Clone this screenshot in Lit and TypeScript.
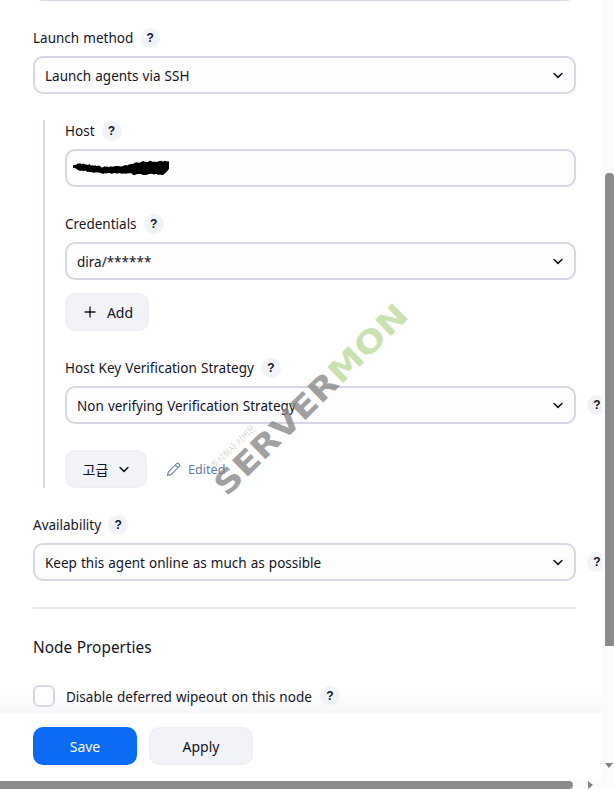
import { LitElement, html, css, svg } from "lit";
import { customElement } from "lit/decorators.js";

const chevron = html`<svg class="chev" viewBox="0 0 12 8" width="10" height="7" aria-hidden="true"><path d="M1.3 1.6 6 6.3l4.7-4.7" fill="none" stroke="#14141f" stroke-width="1.9" stroke-linecap="round" stroke-linejoin="round"/></svg>`;
const help = html`<span class="help">?</span>`;

function select(text: string) {
  return html`<div class="control select"><span class="value">${text}</span>${chevron}</div>`;
}

/* Jagged redaction scribble, computed from a small deterministic noise source. */
function scribblePath(): string {
  const W = 96;
  let seed = 7;
  const noise = () => {
    seed = (seed * 16807) % 2147483647;
    return seed / 2147483647;
  };
  const topAt = (x: number) =>
    x < 6 ? 3 + (6 - x) * 0.5 : x < 28 ? 3 + (x - 6) * 0.15 : x < 48 ? 7 - (x - 28) * 0.05 : x < 68 ? 6 - (x - 48) * 0.2 : 1.5;
  const botAt = (x: number) =>
    x < 6 ? 10 - (6 - x) * 0.4 : x < 30 ? 10.5 + (x - 6) * 0.12 : x < 60 ? 13.5 : x < 90 ? 14.5 : 14.5 - (x - 90) * 0.9;
  const top: string[] = [];
  const bot: string[] = [];
  for (let x = 0; x <= W; x += 1.5) {
    top.push(`${x} ${(topAt(x) + noise() * 1.4 - 0.7).toFixed(1)}`);
    bot.push(`${x} ${(botAt(x) + noise() * 1.4 - 0.7).toFixed(1)}`);
  }
  return `M${top.join("L")}L${bot.reverse().join("L")}Z`;
}
const scribbleD = scribblePath();

@customElement("app-root")
export class AppRoot extends LitElement {
  static styles = css`
    :host {
      display: block;
      position: relative;
      width: 614px;
      height: 789px;
      overflow: hidden;
      background: #fff;
      color: #14141f;
      font-family: "Noto Sans", "Noto Sans CJK KR", sans-serif;
      font-size: 13.5px;
      word-spacing: 0.6px;
    }
    .content {
      position: relative;
      display: flex;
      flex-direction: column;
      padding-left: 33px;
      width: 543px;
      margin-top: -37px;
    }
    .label {
      display: flex;
      align-items: center;
      gap: 7px;
      height: 20px;
      line-height: 20px;
      margin-bottom: 8px;
      white-space: nowrap;
    }
    .help {
      flex: none;
      width: 20px;
      height: 20px;
      border-radius: 50%;
      background: #f1f3f7;
      display: inline-flex;
      align-items: center;
      justify-content: center;
      font-size: 12px;
      font-weight: 700;
      line-height: 1;
      font-family: "Liberation Sans", sans-serif;
    }
    .control {
      box-sizing: border-box;
      height: 38px;
      width: 100%;
      flex: none;
      border: 2px solid #d5d8e4;
      border-radius: 10px;
      background: #fdfdfe;
      display: flex;
      align-items: center;
      padding: 0 11px 0 10px;
      white-space: nowrap;
    }
    .select { justify-content: space-between; }
    .value { padding-top: 2px; }
    .top { margin-bottom: 27px; }
    .with-help {
      display: flex;
      align-items: center;
      gap: 11px;
    }
    .nested {
      display: flex;
      flex-direction: column;
      margin: 26px 0 27px 10px;
      padding: 1px 0 0 20px;
      border-left: 2px solid #d5d8e0;
    }
    .field { margin-bottom: 27px; }
    .field.cred { margin-bottom: 13px; }
    .field.strategy { margin-bottom: 26px; }
    .btn {
      box-sizing: border-box;
      height: 38px;
      border: 2px solid #eef0f5;
      border-radius: 10px;
      background: #f1f3f7;
      display: inline-flex;
      align-items: center;
      justify-content: center;
      font-size: 14px;
    }
    .btn.addbtn { width: 84px; gap: 11px; padding-left: 3px; }
    .btn.adv { width: 82px; gap: 11px; }
    .btnrow { display: flex; align-items: center; gap: 19px; }
    .edited {
      display: inline-flex;
      align-items: center;
      gap: 7px;
      color: #5f7a9f;
      font-size: 12.6px;
    }
    hr {
      border: 0;
      height: 2px;
      width: 100%;
      margin: 26px 0 0;
      background: #e6e7ee;
    }
    h2 {
      font-weight: 400;
      font-size: 15.4px;
      line-height: 22px;
      margin: 28px 0 26px;
    }
    .check {
      display: flex;
      align-items: center;
      gap: 11px;
      height: 22px;
      white-space: nowrap;
    }
    .check-text { padding-top: 2px; }
    .box {
      box-sizing: border-box;
      width: 22px;
      height: 22px;
      border: 2px solid #d5d8e4;
      border-radius: 6px;
      background: #fff;
    }
    .check .help { margin-left: -3px; }
    .bar {
      position: absolute;
      left: 0;
      right: 0;
      top: 713px;
      height: 76px;
      background: #fff;
      box-sizing: border-box;
      padding: 14px 0 0 33px;
      display: flex;
      align-items: flex-start;
      gap: 12px;
    }
    .fade {
      position: absolute;
      left: 0;
      right: 0;
      top: 691px;
      height: 22px;
      background: linear-gradient(to bottom, rgba(243,245,248,0), #f6f7f9);
    }
    .bar .btn { width: 104px; }
    .save {
      background: #0b6bf3;
      border-color: #0b6bf3;
      color: #fff;
    }
    .vtrack {
      position: absolute;
      right: 0;
      top: 0;
      width: 12px;
      height: 789px;
      background: #fbfbfb;
    }
    .vthumb {
      position: absolute;
      left: 3px;
      top: 173px;
      width: 9px;
      height: 473px;
      border-radius: 4px 4px 0 0;
      background: #8b8b8b;
    }
    .varrow {
      position: absolute;
      right: 1px;
      top: 763px;
      width: 0;
      height: 0;
      border-left: 4px solid transparent;
      border-right: 4px solid transparent;
      border-top: 5px solid #808080;
    }
    .htrack {
      position: absolute;
      left: 0;
      bottom: 0;
      width: 602px;
      height: 8px;
      background: #fbfbfb;
    }
    .hthumb {
      position: absolute;
      left: 0;
      top: 0;
      width: 573px;
      height: 8px;
      border-radius: 0 4px 4px 0;
      background: #8b8b8b;
    }
    .harrow {
      position: absolute;
      left: 588px;
      top: 0;
      width: 0;
      height: 0;
      border-top: 4px solid transparent;
      border-bottom: 4px solid transparent;
      border-left: 5px solid #808080;
    }
    .mark {
      position: absolute;
      left: 313px;
      top: 397px;
      width: 0;
      height: 0;
      transform: rotate(-44.5deg);
      pointer-events: none;
    }
    .mark-inner {
      position: absolute;
      left: -113px;
      top: -20px;
      white-space: nowrap;
      font-family: "DejaVu Sans", sans-serif;
      font-weight: 700;
      font-size: 31px;
      line-height: 40px;
      transform: scaleX(1.17);
      color: rgba(135,135,135,0.78);
    }
    .mark-inner b { color: rgba(175,212,135,0.66); font-weight: 700; }
    .mark-sub {
      position: absolute;
      left: -121px;
      top: -26px;
      font-size: 9px;
      line-height: 12px;
      letter-spacing: -0.3px;
      white-space: nowrap;
      font-family: "Noto Sans CJK KR", sans-serif;
      color: rgba(150,150,150,0.45);
    }
    .scribble { display: block; margin-left: -4px; }
  `;

  render() {
    return html`
      <div class="fade"></div>
      <div class="content">
        <div class="control top"></div>

        <div class="label">Launch method ${help}</div>
        ${select("Launch agents via SSH")}

        <div class="nested">
          <div class="label">Host ${help}</div>
          <div class="control field">
            <svg class="scribble" width="96" height="16" viewBox="0 0 96 16" aria-hidden="true">
              ${svg`<path d=${scribbleD} fill="#000"/>`}
            </svg>
          </div>

          <div class="label">Credentials ${help}</div>
          <div class="field cred">${select("dira/******")}</div>
          <div class="field">
            <div class="btn addbtn">
              <svg width="12" height="12" viewBox="0 0 12 12" aria-hidden="true"><path d="M6 .6v10.8M.6 6h10.8" stroke="#14141f" stroke-width="1.3" fill="none"/></svg>
              <span>Add</span>
            </div>
          </div>

          <div class="label">Host Key Verification Strategy ${help}</div>
          <div class="field strategy with-help">
            ${select("Non verifying Verification Strategy")}${help}
          </div>

          <div class="btnrow">
            <div class="btn adv"><span>고급</span>${chevron}</div>
            <span class="edited">
              <svg width="15" height="15" viewBox="0 0 15 15" aria-hidden="true"><path d="M1.5 13.5l.9-3.6L10.6 1.7a1.5 1.5 0 0 1 2.1 0l.6.6a1.5 1.5 0 0 1 0 2.1L5.1 12.6l-3.6.9ZM9.3 3l2.7 2.7" fill="none" stroke="#6f87a8" stroke-width="1.2" stroke-linejoin="round"/></svg>
              <span>Edited</span>
            </span>
          </div>
        </div>

        <div class="label">Availability ${help}</div>
        <div class="with-help">
          ${select("Keep this agent online as much as possible")}${help}
        </div>

        <hr />
        <h2>Node Properties</h2>
        <div class="check"><span class="box"></span><span class="check-text">Disable deferred wipeout on this node</span>${help}</div>
      </div>

      <div class="mark" aria-hidden="true">
        <div class="mark-sub">주식회사 서버몬</div>
        <div class="mark-inner">SERVER<b>MON</b></div>
      </div>

      <div class="bar">
        <div class="btn save">Save</div>
        <div class="btn">Apply</div>
      </div>

      <div class="vtrack"><div class="vthumb"></div><div class="varrow"></div></div>
      <div class="htrack"><div class="hthumb"></div><div class="harrow"></div></div>
    `;
  }
}
